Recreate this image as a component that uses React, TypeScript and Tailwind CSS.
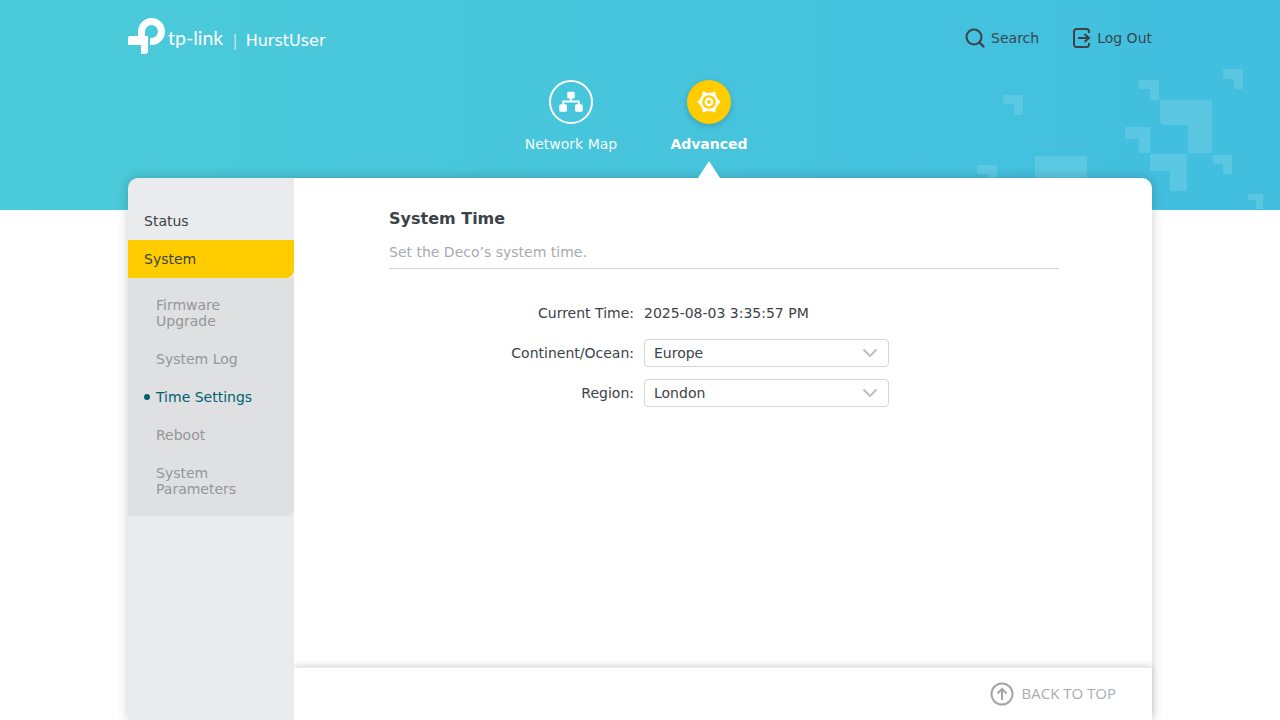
import React from "react";

const sans = "font-['DejaVu_Sans',sans-serif]";

function Corner({ d }: { d: string }) {
  return <path d={d} fill="#fff" fillOpacity="0.13" />;
}

function Pattern() {
  return (
    <svg className="absolute left-0 top-0" width="1280" height="210" viewBox="0 0 1280 210">
      <Corner d="M1223 69h20v20h-7a2 2 0 0 1-2-2v-8h-9a2 2 0 0 1-2-2z" />
      <Corner d="M1139 80h20v20h-7a2 2 0 0 1-2-2v-9h-9a2 2 0 0 1-2-2z" />
      <Corner d="M1160 100h52v53h-22a2 2 0 0 1-2-2v-26h-24a4 4 0 0 1-4-4z" />
      <Corner d="M1125 127h25v26h-9a2 2 0 0 1-2-2v-12h-12a2 2 0 0 1-2-2z" />
      <Corner d="M1150 154h37v37h-15a2 2 0 0 1-2-2v-18h-17a3 3 0 0 1-3-3z" />
      <Corner d="M1213 155h19v19h-7a2 2 0 0 1-2-2v-8h-8a2 2 0 0 1-2-2z" />
      <Corner d="M1248 194h15v15h-6a1 1 0 0 1-1-1v-8h-7a1 1 0 0 1-1-1z" />
      <Corner d="M1003 95h20v20h-7a2 2 0 0 1-2-2v-9h-9a2 2 0 0 1-2-2z" />
      <Corner d="M977 165h20v20h-9v-11h-9a2 2 0 0 1-2-2z" />
      <Corner d="M1035 156h52v30h-52z" />
    </svg>
  );
}

function Logo() {
  return (
    <svg width="38" height="37" viewBox="0 0 38 37" className="shrink-0">
      <path d="M13.500 20V13.500A10 10 0 1 1 23.500 23.500H22" fill="none" stroke="#fff" strokeWidth="7" />
      <path fill="#fff" d="M2 18H20V33Q20 36 17 36H13V27H0V20Q0 18 2 18Z" />
    </svg>
  );
}

function SideSub({ label, active }: { label: string; active?: boolean }) {
  return (
    <div className={`relative py-[11px] pl-7 pr-4 text-sm leading-4 ${active ? "text-[#00606f]" : "text-[#949698]"}`}>
      {active && <span className="absolute left-4 top-[16px] h-[6px] w-[6px] rounded-full bg-[#00606f]" />}
      {label}
    </div>
  );
}

function Field({ label, children }: { label: string; children: React.ReactNode }) {
  return (
    <div className="flex h-7 items-center">
      <div className="w-[350px] pr-[10px] text-right text-sm text-[#3b4248]">{label}</div>
      {children}
    </div>
  );
}

function Select({ value }: { value: string }) {
  return (
    <div className="flex h-7 w-[245px] items-center justify-between rounded-[4px] border border-[#d3d5d6] bg-white pl-[9px] pr-[10px] text-sm text-[#3b4248]">
      {value}
      <svg width="16" height="10" viewBox="0 0 16 10" fill="none">
        <path d="M1.500 1.500L8 8l6.500-6.500" stroke="#c0c2c4" strokeWidth="2.200" />
      </svg>
    </div>
  );
}

export default function App() {
  return (
    <div className={`relative h-[720px] w-[1280px] overflow-hidden bg-white ${sans}`}>
      <header className="relative h-[210px] bg-gradient-to-r from-[#4bcbd9] to-[#42bedf]">
        <Pattern />
        <div className="relative mx-auto flex h-[76px] w-[1024px] items-start justify-between">
          <div className="flex items-center pt-[18px] text-white">
            <Logo />
            <span className="ml-[2px] mt-[3px] font-['Lato',sans-serif] text-[19.500px] font-normal leading-none">tp-link</span>
            <span className="ml-[9px] mt-[8px] text-base font-light">|</span>
            <span className="ml-[8px] mt-[8px] text-base">HurstUser</span>
          </div>
          <div className="flex items-center gap-[34px] pt-[28px] text-sm text-[#38474f]">
            <div className="flex items-center gap-[6px]">
              <svg width="20" height="20" viewBox="0 0 20 20" fill="none" stroke="#38434a" strokeWidth="2">
                <circle cx="9" cy="9" r="7.500" />
                <path d="M14.500 14.500L18.500 18.500" strokeLinecap="round" strokeWidth="2.400" />
              </svg>
              Search
            </div>
            <div className="flex items-center gap-[6px]">
              <svg width="18" height="20" viewBox="0 0 18 20" fill="none" stroke="#38434a" strokeWidth="2">
                <path d="M16 5V3.500a2.500 2.500 0 0 0-2.500-2.500H3.500A2.500 2.500 0 0 0 1 3.500v13A2.500 2.500 0 0 0 3.500 19h10a2.500 2.500 0 0 0 2.500-2.500V15" />
                <path d="M5 10h11M11.500 6l4.500 4-4.500 4" />
              </svg>
              Log Out
            </div>
          </div>
        </div>
        <nav className="relative mx-auto flex w-[276px] justify-center pt-[4px] text-sm text-white">
          <div className="flex w-[138px] flex-col items-center">
            <div className="flex h-11 w-11 items-center justify-center rounded-full border-2 border-white">
              <svg width="24" height="22" viewBox="0 0 24 22" fill="#fff">
                <rect x="8.300" y="0.800" width="7.400" height="6.700" rx="1" />
                <rect x="0.300" y="13.200" width="7.700" height="7.500" rx="1.500" />
                <rect x="16" y="13.200" width="7.700" height="7.500" rx="1.500" />
                <path d="M12 7v3.500M4.200 14v-3.500h15.600V14" fill="none" stroke="#fff" strokeWidth="1.800" />
              </svg>
            </div>
            <div className="mt-[10px] leading-[20px] opacity-95">Network Map</div>
          </div>
          <div className="flex w-[138px] flex-col items-center">
            <div className="flex h-11 w-11 items-center justify-center rounded-full bg-[#ffcc00] shadow-[0_2px_6px_rgba(0,0,0,0.18)]">
              <svg width="26" height="26" viewBox="0 0 26 26" fill="none">
                <path d="M8 4.500H18L22.800 13L18 21.500H8L3.200 13Z" fill="#fff" stroke="#fff" strokeWidth="1.500" strokeLinejoin="round" />
                <g fill="#fff">
                  <circle cx="7.800" cy="4" r="1.400" />
                  <circle cx="18.200" cy="4" r="1.400" />
                  <circle cx="7.800" cy="22" r="1.400" />
                  <circle cx="18.200" cy="22" r="1.400" />
                  <circle cx="3" cy="13" r="1.400" />
                  <circle cx="23" cy="13" r="1.400" />
                </g>
                <circle cx="13" cy="13" r="6.800" fill="#ffcc00" />
                <circle cx="13" cy="13" r="3.200" stroke="#fff" strokeWidth="2.400" />
              </svg>
            </div>
            <div className="mt-[10px] font-bold leading-[20px]">Advanced</div>
          </div>
        </nav>
      </header>

      <div className="relative mx-auto -mt-8 flex h-[542px] w-[1024px] rounded-t-[10px] shadow-[0_0_12px_rgba(0,0,0,0.2)]">
        <div className="absolute -top-[17px] left-[570px] h-0 w-0 border-x-[11px] border-b-[17px] border-x-transparent border-b-white" />
        <aside className="relative z-10 w-[166px] shrink-0 rounded-tl-[10px] bg-[#e9ebed] pt-6 text-sm">
          <div className="flex h-[38px] items-center pl-4 text-[#3b4248]">Status</div>
          <div className="flex h-[38px] items-center rounded-br-lg bg-[#ffcc00] pl-4 text-[#3b4248]">System</div>
          <div className="rounded-br-lg bg-[#dfe0e2] py-2">
            <SideSub label="Firmware Upgrade" />
            <SideSub label="System Log" />
            <SideSub label="Time Settings" active />
            <SideSub label="Reboot" />
            <SideSub label="System Parameters" />
          </div>
        </aside>
        <main className="flex flex-1 flex-col rounded-tr-[10px] bg-white">
          <div className="h-[489px] shrink-0 pt-[31px]">
            <h1 className="ml-[95px] text-base font-bold leading-5 text-[#3b4248]">System Time</h1>
            <div className="ml-[95px] mt-[13px] w-[670px] border-b border-[#d3d5d6] pb-[6px] text-sm leading-5 text-[#a9abad]">Set the Deco’s system time.</div>
            <div className="mt-[30px] flex flex-col gap-3 text-sm">
              <Field label="Current Time:">
                <span className="text-[#3b4248]">2025-08-03 3:35:57 PM</span>
              </Field>
              <Field label="Continent/Ocean:">
                <Select value="Europe" />
              </Field>
              <Field label="Region:">
                <Select value="London" />
              </Field>
            </div>
          </div>
          <div className="flex flex-1 items-start justify-end border-t border-[#ececec] bg-white pr-9 pt-[14px] shadow-[0_-2px_6px_rgba(0,0,0,0.14)]">
            <div className="flex items-center gap-2 font-['Open_Sans',sans-serif] text-[15px] text-[#a9abb0]">
              <svg width="24" height="24" viewBox="0 0 24 24" fill="none" stroke="#a5a5a5" strokeWidth="2">
                <circle cx="12" cy="12" r="10.500" />
                <path d="M12 18V7M7.500 11.500L12 7l4.500 4.500" />
              </svg>
              <span className="-translate-y-px">BACK TO TOP</span>
            </div>
          </div>
        </main>
      </div>
    </div>
  );
}
